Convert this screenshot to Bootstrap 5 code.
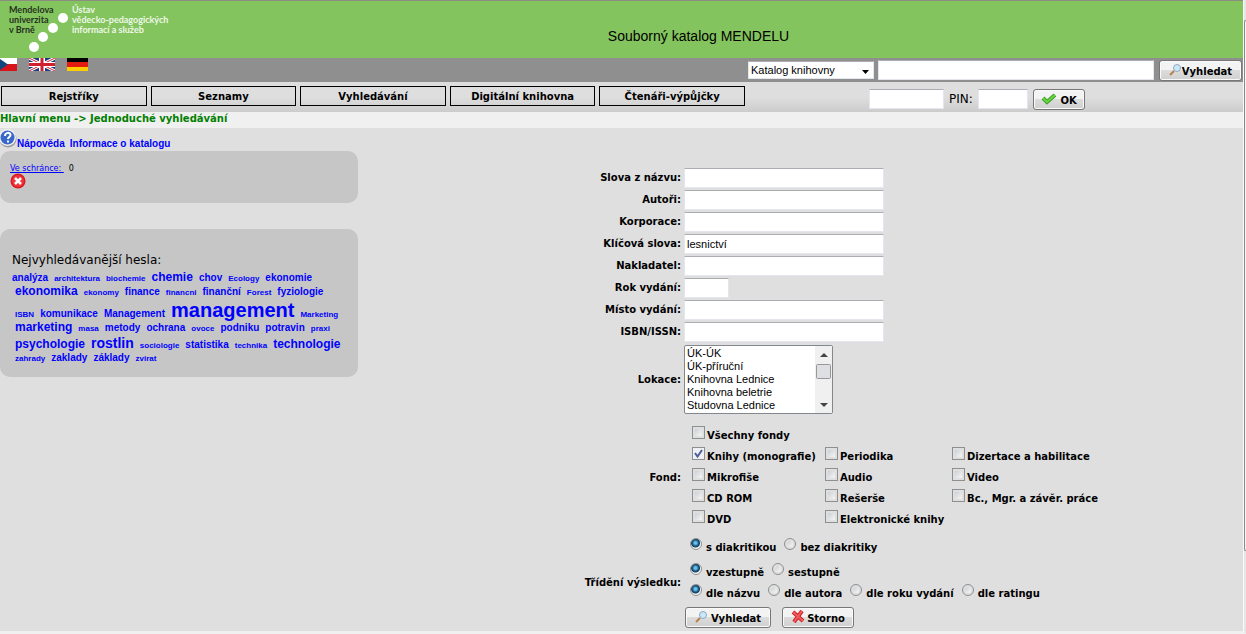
<!DOCTYPE html>
<html lang="cs">
<head>
<meta charset="utf-8">
<meta name="viewport" content="width=device-width, initial-scale=1">
<title>Souborný katalog MENDELU</title>
<link href="https://cdn.jsdelivr.net/npm/bootstrap@5.3.0/dist/css/bootstrap.min.css" rel="stylesheet">
<style>
body{background:#f0f0f0;color:#000;font:10px/14px Verdana,"DejaVu Sans",sans-serif}
a{color:#00f;text-decoration:none}
.page{background:#dfdfdf;margin-bottom:2px}
.edge{width:3px;background:#e6e6e6;border-left:1px solid #fafafa;padding-top:20px}
.edge-thumb{height:531px;border:1px solid #888;border-right:0;border-radius:2px 0 0 2px;background:#f4f4f4}
.banner{height:58px;background:#84c45e;border-top:1px solid #8a8d80}
.logo-text{font:700 9px/10px Lato,sans-serif;padding-top:4px}
.logo-main{color:#26331f;width:64px;padding-left:9px}
.logo-sub{color:#eef8e8;width:110px;padding-left:8px}
.logo-text span{display:block;height:10px;white-space:nowrap}
.dots{left:27px;top:10px}
.catalog-title{font:14px/20px "Liberation Sans",Arial,sans-serif;padding-top:25px;padding-right:20px}
.searchbar{background:#8f8f8f;min-height:24px;padding-right:1px}
.query{width:276px}
.menubar{min-height:30px;background:linear-gradient(#dedede 50%,#ccc);padding-left:1px}
.menu-links{gap:4px;width:744px}
.menu-link{flex:1 1 0;height:20px;border:1px solid #000;color:#000;font-weight:700;line-height:19px;text-align:center}
.login{margin-left:124px;padding-top:4px;gap:5px;font-size:12px}
.w-user{width:75px}
.w-pin{width:50px}
.crumbs{background:#f0f0f0;color:#008000;height:16px;line-height:14px}
.field{height:20px;border:1px solid #e3e6ee;border-top-color:#abadb3;border-radius:1px;background:#fff;padding:0 2px;font:11px/16px "Liberation Sans",Arial,sans-serif;color:#000}
.pick.field{width:126px;height:18px;appearance:none;background:#fff url("data:image/svg+xml,%3Csvg xmlns='http://www.w3.org/2000/svg' width='7' height='4'%3E%3Cpath d='M0 0h7L3.500 4z'/%3E%3C/svg%3E") no-repeat right 4px top 8px}
.w-text{width:200px}
.w-year{width:45px}
.btn-xp{--bs-btn-padding-y:0;--bs-btn-padding-x:0;height:21px;border:1px solid #777;border-radius:3px;box-shadow:inset 0 0 0 1px #fafafa;background:linear-gradient(#f3f3f3 45%,#dcdcdc 50%,#d0d0d0);color:#000;font-size:10px;font-weight:700;line-height:22px;white-space:nowrap;display:flex;align-items:flex-start;justify-content:center}
.btn-xp svg{margin-top:2px}
.btn-xp:hover{background:#e4eef5;color:#000;border-color:#777}
.go{width:83px;margin-left:1px}
.ok{width:52px}
.send{width:86px;gap:3px}
.reset{width:72px;gap:2px}
.side{width:358px}
.help{height:23px;font:700 10px/14px "Liberation Sans",Arial,sans-serif}
.help-links{padding-top:9px;gap:5px}
.panel{background:#c6c6c6;border-radius:10px}
.clip{height:52px;padding:13px 10px 0;font-size:8px;line-height:9px}
.cloud{margin-top:26px;height:148px;padding:24px 12px 0}
.cloud h2{font-size:12px;line-height:15px;margin:0 0 3px;font-weight:400}
.tags{font:700 10px/12px "Liberation Sans",Arial,sans-serif}
.tags div{display:flex;gap:6px;align-items:baseline;white-space:nowrap;padding-left:3px}
.tags .first{padding-left:0}
.t1{font-size:8px}
.t3{font-size:12px}
.t4{font-size:14px;line-height:16px}
.t5{font-size:20px;line-height:22px}
.finder{padding:39px 0 3px;font-weight:700}
.line{display:grid;grid-template-columns:minmax(120px,36.5%) 1fr;column-gap:3px;align-items:center;min-height:22px}
.line>:first-child{text-align:right}
.gap-s{margin-top:2px}
.gap-m{margin-top:6px}
.gap-l{margin-top:11px}
.places{width:149px;height:69px}
.places select{width:100%;height:100%;border:1px solid #828790;background:#fff;padding:1px 0;font:11px/13px "Liberation Sans",Arial,sans-serif;overflow:hidden;scrollbar-width:none}
.places select::-webkit-scrollbar{display:none}
.places option{padding:0 2px;min-height:13px;height:13px;line-height:13px}
.places svg{right:1px;top:1px}
.funds{display:grid;grid-template-columns:133px 127px 1fr;padding-left:8px}
.choice{display:flex;align-items:flex-start;white-space:nowrap;height:21px}
.choice span{padding-top:4px}
.choice input{appearance:none;flex:none;width:13px;height:13px;margin:1px 2px 0 0;border:1px solid #8e8f8f;background:linear-gradient(135deg,#cbcfd5,#f6f6f6) content-box #f4f4f4;padding:2px}
.choice input[type=checkbox]:checked{background:url("data:image/svg+xml,%3Csvg xmlns='http://www.w3.org/2000/svg' viewBox='0 0 11 11'%3E%3Cpath d='M2 5l2.500 3.500L9 2' fill='none' stroke='%234a5f97' stroke-width='2'/%3E%3C/svg%3E") #eef0f5}
.choice input[type=radio]{border-radius:50%;width:12px;height:12px;margin-right:4px}
.choice input[type=radio]:checked{background:radial-gradient(circle at 45% 40%,#6cc4ea 0 1px,#1c5f8c 3px,#123a5a 4px,#f4f4f4 5px)}
.radios{display:flex;gap:8px;padding-left:6px}
.actions{gap:11px;padding-left:1px}
</style>
</head>
<body>
<div class="d-flex align-items-stretch">
<div class="page flex-grow-1">
<header class="banner d-flex position-relative">
  <div class="logo-text logo-main"><span>Mendelova</span><span>univerzita</span><span>v Brně</span></div>
  <div class="logo-text logo-sub"><span>Ústav</span><span>vědecko-pedagogických</span><span>informací a služeb</span></div>
  <svg class="dots position-absolute" width="44" height="42" aria-hidden="true"><g fill="#fff"><circle cx="36" cy="7" r="5"/><circle cx="26" cy="17" r="5"/><circle cx="16" cy="26" r="5"/><circle cx="7" cy="36" r="5"/></g></svg>
  <div class="catalog-title flex-grow-1 text-center">Souborný katalog MENDELU</div>
</header>
<div class="searchbar d-flex justify-content-between">
  <nav class="d-flex" aria-label="Jazyk">
    <a href="#" aria-label="Česky"><svg width="17" height="13" class="d-block"><path fill="#fff" d="M0 0h17v7H0z"/><path fill="#d7141a" d="M0 6h17v7H0z"/><path fill="#11457e" d="M0 1l8 5.500L0 12z"/></svg></a>
    <a href="#" aria-label="English" class="ms-2 ps-1"><svg width="26" height="13" viewBox="0 0 26 13" class="d-block"><path fill="#1f3a7c" d="M0 0h26v13H0z"/><path stroke="#fff" stroke-width="3" d="M0 0l26 13M26 0L0 13"/><path stroke="#d02030" d="M0 0l26 13M26 0L0 13"/><path stroke="#fff" stroke-width="6" d="M13 0v13"/><path stroke="#fff" stroke-width="5" d="M0 6.500h26"/><path stroke="#d02030" stroke-width="3" d="M13 0v13M0 6.500h26"/></svg></a>
    <a href="#" aria-label="Deutsch" class="ms-2 ps-1"><svg width="21" height="13" class="d-block"><path d="M0 0h21v4H0z"/><path fill="#e31b10" d="M0 4h21v5H0z"/><path fill="#fc0" d="M0 9h21v4H0z"/></svg></a>
  </nav>
  <form class="d-flex align-items-center gap-1">
    <select class="field pick" aria-label="Katalog"><option>Katalog knihovny</option></select>
    <input class="field query" type="text" aria-label="Hledat">
    <button type="button" class="btn btn-xp go"><svg width="13" height="13" viewBox="0 0 13 13"><path d="M1 12l4-4" stroke="#b8804a" stroke-width="2"/><circle cx="8" cy="5" r="3.500" fill="#c9e9fb" stroke="#8fa9bd"/></svg>Vyhledat</button>
  </form>
</div>
<div class="menubar d-flex">
  <nav class="menu-links d-flex pt-1">
    <a class="menu-link" href="#">Rejstříky</a><a class="menu-link" href="#">Seznamy</a><a class="menu-link" href="#">Vyhledávání</a><a class="menu-link" href="#">Digitální knihovna</a><a class="menu-link" href="#">Čtenáři-výpůjčky</a>
  </nav>
  <form class="login d-flex align-items-center">
    <input class="field w-user" type="text" aria-label="Čtenář"><label for="pin">PIN:</label>
    <input class="field w-pin" id="pin" type="password">
    <button type="button" class="btn btn-xp ok"><svg width="16" height="13" viewBox="0 0 16 13"><path d="M2 6l4 4 8-7" fill="none" stroke="#3f9e2a" stroke-width="4"/><path d="M2 6l4 4 8-7" fill="none" stroke="#69d63f" stroke-width="2"/></svg>&nbsp;OK</button>
  </form>
</div>
<div class="crumbs fw-bold">Hlavní menu -&gt; Jednoduché vyhledávání</div>
<div class="d-flex">
<aside class="side flex-shrink-0">
  <div class="help d-flex"><svg width="17" height="20" viewBox="0 0 17 20"><circle cx="8" cy="11" r="8.500" fill="#999"/><circle cx="7.500" cy="9.500" r="8.500" fill="#f1f1f5"/><circle cx="7.500" cy="9.500" r="7" fill="#3868c8"/><path d="M5 8c0-4 5.500-4 5.500-1 0 2-2.500 2-2.500 4M8 12.500v2" fill="none" stroke="#fff" stroke-width="2"/></svg><span class="help-links d-flex"><a href="#">Nápověda</a><a href="#">Informace o katalogu</a></span></div>
  <section class="panel clip"><a href="#" class="text-decoration-underline">Ve schránce:&nbsp;</a>&nbsp; 0
    <button type="button" class="btn p-0 border-0 d-block lh-1" aria-label="Vyprázdnit"><svg class="d-block" width="16" height="16"><circle cx="8" cy="8" r="7.500" fill="#d91a20"/><circle cx="8" cy="8" r="6" fill="#f0343a"/><path d="M5 5l6 6M11 5l-6 6" stroke="#fff" stroke-width="2.500"/></svg></button>
  </section>
  <section class="panel cloud">
    <h2>Nejvyhledávanější hesla:</h2>
    <div class="tags">
      <div class="first"><a href="#">analýza</a><a class="t1" href="#">architektura</a><a class="t1" href="#">biochemie</a><a class="t3" href="#">chemie</a><a href="#">chov</a><a class="t1" href="#">Ecology</a><a href="#">ekonomie</a></div>
      <div><a class="t3" href="#">ekonomika</a><a class="t1" href="#">ekonomy</a><a href="#">finance</a><a class="t1" href="#">financni</a><a href="#">finanční</a><a class="t1" href="#">Forest</a><a href="#">fyziologie</a></div>
      <div><a class="t1" href="#">ISBN</a><a href="#">komunikace</a><a href="#">Management</a><a class="t5" href="#">management</a><a class="t1" href="#">Marketing</a></div>
      <div><a class="t3" href="#">marketing</a><a class="t1" href="#">masa</a><a href="#">metody</a><a href="#">ochrana</a><a class="t1" href="#">ovoce</a><a href="#">podniku</a><a href="#">potravin</a><a class="t1" href="#">praxi</a></div>
      <div><a class="t3" href="#">psychologie</a><a class="t4" href="#">rostlin</a><a class="t1" href="#">sociologie</a><a href="#">statistika</a><a class="t1" href="#">technika</a><a class="t3" href="#">technologie</a></div>
      <div><a class="t1" href="#">zahrady</a><a href="#">zaklady</a><a href="#">základy</a><a class="t1" href="#">zvirat</a></div>
    </div>
  </section>
</aside>
<form class="finder flex-grow-1">
  <div class="line"><label for="f1">Slova z názvu:</label><input id="f1" class="field w-text" type="text"></div>
  <div class="line"><label for="f2">Autoři:</label><input id="f2" class="field w-text" type="text"></div>
  <div class="line"><label for="f3">Korporace:</label><input id="f3" class="field w-text" type="text"></div>
  <div class="line"><label for="f4">Klíčová slova:</label><input id="f4" class="field w-text" type="text" value="lesnictví"></div>
  <div class="line"><label for="f5">Nakladatel:</label><input id="f5" class="field w-text" type="text"></div>
  <div class="line"><label for="f6">Rok vydání:</label><input id="f6" class="field w-year" type="text"></div>
  <div class="line"><label for="f7">Místo vydání:</label><input id="f7" class="field w-text" type="text"></div>
  <div class="line"><label for="f8">ISBN/ISSN:</label><input id="f8" class="field w-text" type="text"></div>
  <div class="line gap-s"><label for="f9">Lokace:</label>
    <div class="places position-relative"><select id="f9" multiple size="5"><option>ÚK-ÚK</option><option>ÚK-příruční</option><option>Knihovna Lednice</option><option>Knihovna beletrie</option><option>Studovna Lednice</option></select>
    <svg class="position-absolute" width="17" height="67" aria-hidden="true"><path fill="#f0f0f0" d="M0 0h17v67H0z"/><path fill="#444" d="M5 11l4-4 4 4zM5 57l4 4 4-4z"/><rect x="1.500" y="18.500" width="14" height="14" rx="1" fill="#dedfe2" stroke="#979797"/></svg></div></div>
  <div class="line gap-l"><span>Fond:</span>
    <div class="funds">
      <label class="choice"><input type="checkbox"><span>Všechny fondy</span></label><i></i><i></i>
      <label class="choice"><input type="checkbox" checked><span>Knihy (monografie)</span></label><label class="choice"><input type="checkbox"><span>Periodika</span></label><label class="choice"><input type="checkbox"><span>Dizertace a habilitace</span></label>
      <label class="choice"><input type="checkbox"><span>Mikrofiše</span></label><label class="choice"><input type="checkbox"><span>Audio</span></label><label class="choice"><input type="checkbox"><span>Video</span></label>
      <label class="choice"><input type="checkbox"><span>CD ROM</span></label><label class="choice"><input type="checkbox"><span>Rešerše</span></label><label class="choice"><input type="checkbox"><span>Bc., Mgr. a závěr. práce</span></label>
      <label class="choice"><input type="checkbox"><span>DVD</span></label><label class="choice"><input type="checkbox"><span>Elektronické knihy</span></label>
    </div></div>
  <div class="line gap-m"><span></span><div class="radios"><label class="choice"><input type="radio" name="d" checked><span>s diakritikou</span></label><label class="choice"><input type="radio" name="d"><span>bez diakritiky</span></label></div></div>
  <div class="line mt-1"><span>Třídění výsledku:</span><div>
    <div class="radios"><label class="choice"><input type="radio" name="o" checked><span>vzestupně</span></label><label class="choice"><input type="radio" name="o"><span>sestupně</span></label></div>
    <div class="radios"><label class="choice"><input type="radio" name="s" checked><span>dle názvu</span></label><label class="choice"><input type="radio" name="s"><span>dle autora</span></label><label class="choice"><input type="radio" name="s"><span>dle roku vydání</span></label><label class="choice"><input type="radio" name="s"><span>dle ratingu</span></label></div></div></div>
  <div class="line gap-s"><span></span><div class="actions d-flex"><button type="button" class="btn btn-xp send"><svg width="13" height="13" viewBox="0 0 13 13"><path d="M1 12l4-4" stroke="#b8804a" stroke-width="2"/><circle cx="8" cy="5" r="3.500" fill="#c9e9fb" stroke="#8fa9bd"/></svg>Vyhledat</button><button type="reset" class="btn btn-xp reset"><svg width="14" height="13" viewBox="0 0 14 13"><path d="M2 2l10 9M11 1L3 12" stroke="#c9252b" stroke-width="4"/><path d="M2 2l10 9M11 1L3 12" stroke="#f4595c" stroke-width="2"/></svg>Storno</button></div></div>
</form>
</div>
</div>
<div class="edge flex-shrink-0"><div class="edge-thumb"></div></div>
</div>
<script src="https://cdn.jsdelivr.net/npm/bootstrap@5.3.0/dist/js/bootstrap.bundle.min.js"></script>
</body>
</html>
